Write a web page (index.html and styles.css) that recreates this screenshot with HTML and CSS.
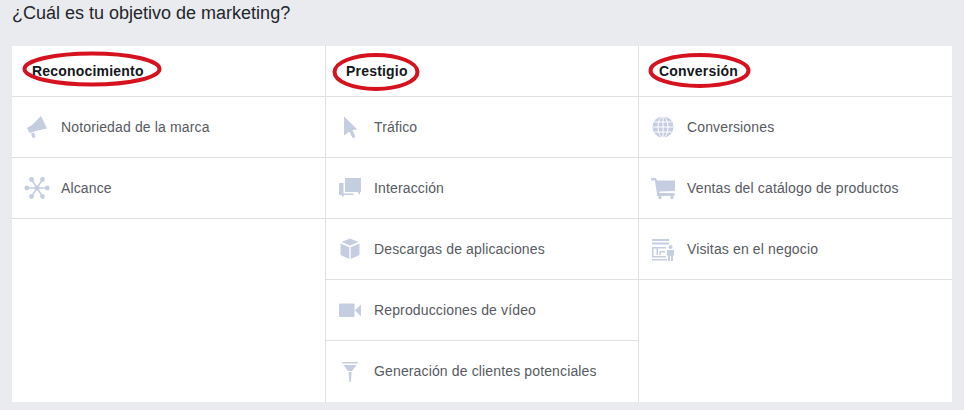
FILE: index.html
```html
<!DOCTYPE html>
<html lang="es">
<head>
<meta charset="utf-8">
<title>Objetivo de marketing</title>
<link rel="stylesheet" href="styles.css">
</head>
<body>
<h1 class="title">¿Cuál es tu objetivo de marketing?</h1>
<div class="card">
  <section class="col">
    <header class="head"><span class="head-text">Reconocimiento</span>
      <svg class="ring ring-a" viewBox="0 0 140 36"><ellipse cx="70" cy="18" rx="67.5" ry="15.5"/></svg>
    </header>
    <div class="row">
      <svg class="icon" viewBox="0 0 26 26"><path d="M17 2 23 14.500 12 17 5.500 19 3 14 8 11Z"/><path d="M7 19.500 10 18.500 11.500 23 8.500 24Z"/></svg>
      <span>Notoriedad de la marca</span>
    </div>
    <div class="row">
      <svg class="icon" viewBox="0 0 26 26"><g class="spokes"><path d="M13 13 7.5 4.5M13 13 18.5 4.5M13 13 2.5 13M13 13 23.5 13M13 13 7.5 21.5M13 13 18.5 21.5"/></g><circle cx="7.5" cy="4.5" r="2.4"/><circle cx="18.5" cy="4.5" r="2.4"/><circle cx="2.8" cy="13" r="2.4"/><circle cx="23.2" cy="13" r="2.4"/><circle cx="7.5" cy="21.5" r="2.4"/><circle cx="18.5" cy="21.5" r="2.4"/><circle cx="13" cy="13" r="2.6"/></svg>
      <span>Alcance</span>
    </div>
  </section>
  <section class="col">
    <header class="head"><span class="head-text">Prestigio</span>
      <svg class="ring ring-b" viewBox="0 0 88 38"><ellipse cx="44" cy="19" rx="41.5" ry="17"/></svg>
    </header>
    <div class="row">
      <svg class="icon" viewBox="0 0 26 26"><path d="M6 2.500 19.500 15.500 14.500 16 17.500 23 14.500 24 11.500 17.500 6 21.500Z"/></svg>
      <span>Tráfico</span>
    </div>
    <div class="row">
      <svg class="icon" viewBox="0 0 26 26"><path d="M7 3H23V17H22V20L19.500 17H7Z"/><path d="M1 8H5.500V18.500H15.500V20H6.500L4 22.500V20H1Z"/></svg>
      <span>Interacción</span>
    </div>
    <div class="row">
      <svg class="icon" viewBox="0 0 26 26"><path d="M12 2.500 20.500 6 12 9.500 3.500 6Z"/><path d="M2.500 7.500 11.300 11.200V23L2.500 19Z"/><path d="M21.500 7.500 12.700 11.200V23L21.500 19Z"/></svg>
      <span>Descargas de aplicaciones</span>
    </div>
    <div class="row">
      <svg class="icon" viewBox="0 0 26 26"><rect x="1" y="6.500" width="15.500" height="13.500" rx="1"/><path d="M23 7.500V19.500L17 13.500Z"/></svg>
      <span>Reproducciones de vídeo</span>
    </div>
    <div class="row">
      <svg class="icon" viewBox="0 0 26 26"><path d="M4 4H20L19.500 5.500H4.500Z"/><path d="M5.500 7H18.500L14 13H10Z"/><path d="M10.500 14H13.500L13 24H11.500Z"/></svg>
      <span>Generación de clientes potenciales</span>
    </div>
  </section>
  <section class="col">
    <header class="head"><span class="head-text">Conversión</span>
      <svg class="ring ring-c" viewBox="0 0 103 35"><ellipse cx="51.500" cy="17.500" rx="49" ry="15.500"/></svg>
    </header>
    <div class="row">
      <svg class="icon" viewBox="0 0 26 26"><circle cx="12" cy="13" r="10.500"/><g class="lines"><path d="M2 13H22M3.500 8H20.500M3.500 18H20.500M12 2.500V23.500"/><ellipse cx="12" cy="13" rx="5" ry="10.500"/></g></svg>
      <span>Conversiones</span>
    </div>
    <div class="row">
      <svg class="icon" viewBox="0 0 26 26"><path d="M0 3H5L6 5.500H24V16L8.500 16.500 8.500 18H23.500V21H6L6 18.500 3.800 5.500H0Z"/><circle cx="9" cy="22.500" r="1.700"/><circle cx="21" cy="22.500" r="1.700"/></svg>
      <span>Ventas del catálogo de productos</span>
    </div>
    <div class="row">
      <svg class="icon" viewBox="0 0 26 26"><path d="M1 3H18V5H1ZM1 6.500H18V8.500H1ZM1 11H15V12.500H7V19H5.500V12.500H2.500V20H15V21.500H1Z"/><path d="M8.500 15H14V16.500H10V19H8.500ZM1 23H16V24.500H1Z"/><circle cx="19.500" cy="11" r="2"/><path d="M16 14H23V19.500H22V25H20V20H19V25H17V19.500H16Z"/></svg>
      <span>Visitas en el negocio</span>
    </div>
  </section>
</div>
</body>
</html>
```
FILE: styles.css
```css
html, body {
  margin: 0;
  height: 100%;
}
body {
  background: #e9ebee;
  font-family: "Liberation Sans", Arial, sans-serif;
  overflow: hidden;
  padding: 0 12px;
  box-sizing: border-box;
}
.title {
  margin: 0;
  height: 46px;
  padding-top: 3px;
  box-sizing: border-box;
  font-size: 18px;
  line-height: 20px;
  font-weight: 400;
  color: #23262c;
}
.card {
  width: 940px;
  height: 356px;
  background: #fff;
  display: grid;
  grid-template-columns: 314px 313px 313px;
}
.col {
  border-right: 1px solid #dddfe2;
}
.col:last-child {
  border-right: 0;
}
.head {
  position: relative;
  height: 51px;
  box-sizing: border-box;
  border-bottom: 1px solid #dddfe2;
  display: flex;
  align-items: center;
  padding: 0 0 1px 20px;
  font-size: 14px;
  font-weight: 700;
  letter-spacing: 0.2px;
  color: #14171c;
}
.head-text {
  position: relative;
}
.ring {
  position: absolute;
  fill: none;
  stroke: #d5121e;
  stroke-width: 4;
  overflow: visible;
}
.ring-a { left: 10px; top: 5px; width: 140px; height: 36px; }
.ring-b { left: 6px; top: 7px; width: 88px; height: 38px; }
.ring-c { left: 9px; top: 7px; width: 103px; height: 35px; }
.row {
  height: 61px;
  box-sizing: border-box;
  border-bottom: 1px solid #dddfe2;
  display: flex;
  align-items: center;
  padding: 0 0 1px 12px;
  gap: 10px;
  font-size: 14px;
  letter-spacing: 0.14px;
  color: #565a62;
}
.col:first-child .row {
  gap: 11px;
}
.icon {
  width: 26px;
  height: 26px;
  flex: none;
  fill: #c5cde0;
}
.col:nth-child(2) .row:last-child {
  border-bottom: 0;
}
.spokes path, .lines path, .lines ellipse {
  fill: none;
  stroke-width: 1.500;
}
.spokes path { stroke: #c5cde0; }
.lines path, .lines ellipse { stroke: #fff; stroke-width: 1; }
```
